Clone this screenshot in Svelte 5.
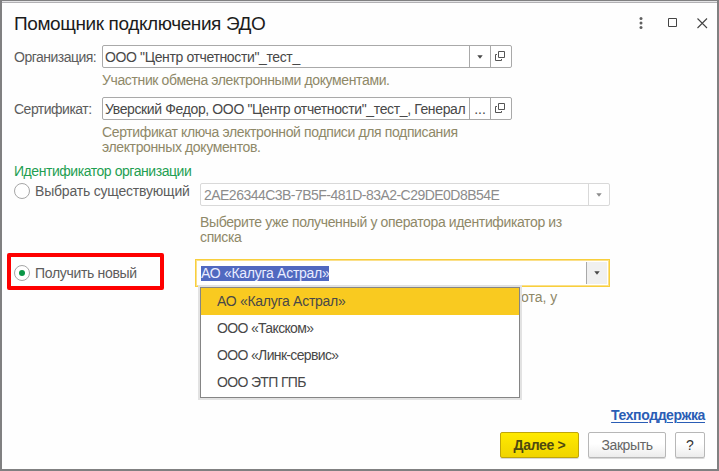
<!-- script -->
<script lang="ts">
  /* constants */
  const operators = ['АО «Калуга Астрал»', 'ООО «Такском»', 'ООО «Линк-сервис»', 'ООО ЭТП ГПБ']

  /* state */
  let mode = $state('new')
  let selected = $state(0)
</script>

<!-- icons -->
{#snippet arrow()}
  <svg class="arrow" width="6" height="4" viewBox="0 0 6 4"><path d="M0.3 0.3h5.4L3 3.8z" fill="currentColor" /></svg>
{/snippet}

{#snippet openIcon()}
  <svg class="open" width="10" height="10" viewBox="0 0 10 10" fill="none" stroke="#555">
    <path d="M3.5 0.5h6v6h-6z" />
    <path d="M2 3.5H0.5v6h6V8" />
  </svg>
{/snippet}

<!-- template -->
<div class="window">
  <header>
    <h1>Помощник подключения ЭДО</h1>
    <div class="controls">
      <svg width="4" height="12" viewBox="0 0 4 12" fill="#606060">
        <circle cx="2" cy="1.6" r="1.5" />
        <circle cx="2" cy="6" r="1.5" />
        <circle cx="2" cy="10.4" r="1.5" />
      </svg>
      <svg width="10" height="10" viewBox="0 0 10 10"><path d="M1.5 0.5h8v8h-8z" fill="none" stroke="#444" /></svg>
      <svg width="11" height="11" viewBox="0 0 11 11"><path d="M0.5 0.5l9.5 9.5M10 0.5L0.5 10" fill="none" stroke="#444" stroke-width="1.1" /></svg>
    </div>
  </header>

  <div class="row">
    <span class="label">Организация:</span>
    <div>
      <div class="field">
        <span class="value">ООО "Центр отчетности"_тест_</span>
        <span class="btn">{@render arrow()}</span>
        <span class="btn">{@render openIcon()}</span>
      </div>
      <p class="hint">Участник обмена электронными документами.</p>
    </div>
  </div>

  <div class="row cert-row">
    <span class="label">Сертификат:</span>
    <div>
      <div class="field">
        <span class="value">Уверский Федор, ООО "Центр отчетности"_тест_, Генерал</span>
        <span class="btn">...</span>
        <span class="btn">{@render openIcon()}</span>
      </div>
      <p class="hint">Сертификат ключа электронной подписи для подписания<br />электронных документов.</p>
    </div>
  </div>

  <h2>Идентификатор организации</h2>

  <div class="option">
    <button class="radio existing" class:checked={mode === 'existing'} onclick={() => (mode = 'existing')}>
      <i></i><span>Выбрать существующий</span>
    </button>
    <div>
      <div class="field disabled">
        <span class="value">2AE26344C3B-7B5F-481D-83A2-C29DE0D8B54E</span>
        <span class="btn">{@render arrow()}</span>
      </div>
      <p class="hint existing-hint">Выберите уже полученный у оператора идентификатор из<br />списка</p>
    </div>
  </div>

  <div class="option new">
    <button class="radio" class:checked={mode === 'new'} onclick={() => (mode = 'new')}>
      <i></i><span>Получить новый</span>
    </button>
    <div class="marker"></div>
    <div class="combo-wrap">
      <div class="combo">
        <span class="selection">{operators[selected]}</span>
        <span class="combo-btn">{@render arrow()}</span>
      </div>
      <p class="hint tail">ота, у</p>
      <ul class="menu">
        {#each operators as operator, i}
          <li><button class:active={i === selected} onclick={() => (selected = i)}>{operator}</button></li>
        {/each}
      </ul>
    </div>
  </div>

  <footer>
    <a href="#support">Техподдержка</a>
    <div class="actions">
      <button class="action primary">Далее &gt;</button>
      <button class="action close">Закрыть</button>
      <button class="action help">?</button>
    </div>
  </footer>
</div>

<!-- styles -->
<style>
  :global(body) {
    margin: 0;
    background: #fff;
  }

  /* window */
  .window {
    box-sizing: border-box;
    width: 719px;
    height: 471px;
    display: flex;
    flex-direction: column;
    border: 2px solid #808081;
    border-top-width: 1px;
    box-shadow: inset 0 1px #e4e4e6, inset 0 2px #b2b1b4;
    background: #fefefe;
    padding: 0 12px;
    font-family: "Liberation Sans", Arial, sans-serif;
    font-size: 14px;
    line-height: 15px;
    color: #484848;
    white-space: nowrap;
  }
  button {
    font: inherit;
    color: inherit;
    padding: 0;
    border: 0;
    background: none;
  }

  /* header */
  header {
    height: 44px;
    display: flex;
    justify-content: space-between;
    align-items: center;
  }
  h1 {
    margin: 2px 0 0;
    font-size: 19px;
    font-weight: 400;
    line-height: 24px;
    letter-spacing: -0.4px;
    color: #1c1c1c;
  }
  .controls {
    display: flex;
    align-items: center;
    gap: 24px;
    margin-right: -3px;
  }
  .controls svg:last-child {
    margin-left: -4px;
  }

  /* fields */
  .row {
    display: grid;
    grid-template-columns: 88px 410px;
    height: 52px;
  }
  .cert-row {
    height: 67px;
  }
  .label {
    line-height: 24px;
    letter-spacing: -0.51px;
    color: #5c5c5c;
  }
  .field {
    box-sizing: border-box;
    width: 410px;
    height: 23px;
    display: flex;
    border: 1px solid #a9a9a9;
    border-radius: 2px;
    background: #fff;
    line-height: 22px;
  }
  .value {
    flex: 1;
    min-width: 0;
    overflow: hidden;
    padding-left: 2px;
    letter-spacing: -0.37px;
  }
  .btn {
    box-sizing: border-box;
    width: 21px;
    display: flex;
    justify-content: center;
    align-items: center;
    border-left: 1px solid #a9a9a9;
  }
  .open {
    margin: 0 2px 1px 0;
  }
  .disabled {
    border-color: #d9d9d9;
    color: #8c8c8c;
  }
  .disabled .value {
    padding-left: 3px;
    letter-spacing: -0.53px;
  }
  .disabled .btn {
    border-color: #d9d9d9;
  }
  .hint {
    margin: 5px 0 0;
    letter-spacing: -0.37px;
    color: #8e8868;
  }
  h2 {
    margin: -1px 0 0;
    font-size: 14px;
    font-weight: 400;
    line-height: 16px;
    letter-spacing: -0.45px;
    color: #1f9f52;
  }

  /* options */
  .option {
    display: grid;
    grid-template-columns: 186px 410px;
    margin-top: 4px;
    height: 76px;
  }
  .radio {
    display: flex;
    align-items: center;
    gap: 5px;
    height: 16px;
    letter-spacing: -0.32px;
    color: #5c5c5c;
  }
  .radio i {
    box-sizing: border-box;
    width: 16px;
    height: 16px;
    display: flex;
    justify-content: center;
    align-items: center;
    border: 1px solid #a6a6a6;
    border-radius: 50%;
    background: #fff;
  }
  .checked i::after {
    content: '';
    width: 6px;
    height: 6px;
    border-radius: 50%;
    background: #0a9646;
  }
  .existing {
    letter-spacing: -0.2px;
  }
  .existing-hint {
    margin-top: 9px;
  }
  .new {
    position: relative;
    grid-template-columns: 181px 415px;
    margin-top: 0;
  }
  .new .radio {
    margin-top: 6px;
  }
  .marker {
    position: absolute;
    left: -7px;
    top: -6px;
    box-sizing: border-box;
    width: 157px;
    height: 37px;
    border: 4px solid #fe0000;
    border-radius: 2px;
  }

  /* combo */
  .combo-wrap {
    position: relative;
    height: 28px;
  }
  .combo {
    box-sizing: border-box;
    height: 28px;
    display: flex;
    justify-content: space-between;
    align-items: center;
    border: 1px solid #f8cf3c;
    box-shadow: inset 0 0 0 1px #fbe08a;
    background: #fff;
    padding: 0 2px 0 5px;
  }
  .selection {
    background: #5068c0;
    letter-spacing: -0.28px;
    color: #e9ecff;
  }
  .combo-btn {
    box-sizing: border-box;
    width: 21px;
    height: 22px;
    display: flex;
    justify-content: center;
    align-items: center;
    border-left: 1px solid #a9a9a9;
    background: #f0f0f0;
  }
  .tail {
    margin-top: 3px;
    padding-left: 326px;
    letter-spacing: 0;
  }
  .menu {
    position: absolute;
    left: 5px;
    top: 28px;
    box-sizing: border-box;
    width: 320px;
    height: 111px;
    margin: 0;
    padding: 0;
    list-style: none;
    border: 1px solid #858585;
    background: #fff;
    box-shadow: 0 0 0 2px #e2e2e2;
  }
  .menu button {
    display: block;
    width: 100%;
    height: 27px;
    padding-left: 16px;
    letter-spacing: -0.28px;
    text-align: left;
  }
  .menu li + li button {
    letter-spacing: -0.65px;
  }
  .menu .active {
    background: #f9ca20;
  }

  /* footer */
  footer {
    display: flex;
    flex-direction: column;
    align-items: flex-end;
    margin-top: auto;
    padding-bottom: 11px;
  }
  a {
    font-weight: 700;
    letter-spacing: -0.4px;
    color: #2a5db5;
    text-underline-offset: 2px;
    text-decoration-thickness: 1px;
  }
  .actions {
    display: flex;
    gap: 9px;
    margin-top: 9px;
  }
  .action {
    box-sizing: border-box;
    height: 26px;
    border: 1px solid #b7b7b7;
    border-radius: 2px;
    background: linear-gradient(#fff 45%, #ececec);
    box-shadow: 0 1px #d8d8d8;
  }
  .primary {
    width: 79px;
    border-color: #bfa50a;
    background: linear-gradient(#ffea00, #f0d400);
    font-weight: 700;
    letter-spacing: -0.3px;
    color: #4d4810;
  }
  .close {
    width: 78px;
    letter-spacing: -0.4px;
    color: #666;
  }
  .help {
    width: 30px;
    color: #333;
  }
</style>
